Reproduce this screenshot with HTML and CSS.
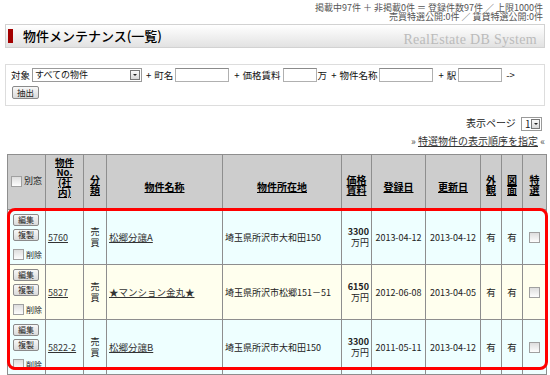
FILE: index.html
```html
<!DOCTYPE html>
<html lang="ja">
<head>
<meta charset="UTF-8">
<title>物件メンテナンス(一覧)</title>
<link rel="stylesheet" href="styles.css">
</head>
<body>
    <div class="page">
        <div class="stats">
            <div>掲載中97件 ＋ 非掲載0件 ＝ 登録件数97件 ／ 上限1000件</div>
            <div>売買特選公開:0件 ／ 賃貸特選公開:0件</div>
        </div>

        <div class="title-bar">
            <span class="mark"></span>
            <h1>物件メンテナンス(一覧)</h1>
            <span class="system">RealEstate DB System</span>
        </div>

        <form class="search">
            <div class="search-row">
                <span>対象</span>
                <span class="fake-select wide"><span class="value">すべての物件</span><span class="arrow"></span></span>
                <span class="plus">+</span><span>町名</span>
                <input type="text" class="field w54">
                <span class="plus">+</span><span>価格賃料</span>
                <input type="text" class="field w34">
                <span>万</span>
                <span class="plus">+</span><span>物件名称</span>
                <input type="text" class="field w54">
                <span class="plus">+</span><span>駅</span>
                <input type="text" class="field w44">
                <span class="go">-&gt;</span>
            </div>
            <button type="button" class="btn extract">抽出</button>
        </form>

        <div class="pager">
            表示ページ
            <span class="fake-select small"><span class="value">1</span><span class="arrow"></span></span>
        </div>
        <div class="order-link">» <a href="#">特選物件の表示順序を指定</a> «</div>

        <div class="list-wrap">
            <table class="list">
                <colgroup>
                    <col style="width:38px">
                    <col style="width:38px">
                    <col style="width:23px">
                    <col style="width:116px">
                    <col style="width:119px">
                    <col style="width:30px">
                    <col style="width:54px">
                    <col style="width:55px">
                    <col style="width:21px">
                    <col style="width:21px">
                    <col style="width:24px">
                </colgroup>
                <thead>
                    <tr>
                        <th class="win"><label><input type="checkbox" class="check"> 別窓</label></th>
                        <th class="top"><a href="#">物件<br>No.<br>(社<br>内)</a></th>
                        <th class="mid"><a href="#">分<br>類</a></th>
                        <th><a href="#">物件名称</a></th>
                        <th><a href="#">物件所在地</a></th>
                        <th class="mid"><a href="#">価格<br>賃料</a></th>
                        <th><a href="#">登録日</a></th>
                        <th><a href="#">更新日</a></th>
                        <th class="mid"><a href="#">外<br>観</a></th>
                        <th class="mid"><a href="#">図<br>面</a></th>
                        <th class="mid"><a href="#">特<br>選</a></th>
                    </tr>
                </thead>
                <tbody>
                    <tr class="blue">
                        <td class="ops">
                            <button type="button" class="btn mini">編集</button>
                            <button type="button" class="btn mini">複製</button>
                            <label class="del"><input type="checkbox" class="check"> 削除</label>
                        </td>
                        <td><a href="#" class="num">5760</a></td>
                        <td class="kind">売<br>買</td>
                        <td class="name"><a href="#">松郷分譲A</a></td>
                        <td class="addr">埼玉県所沢市大和田150</td>
                        <td class="price"><b>3300</b><br>万円</td>
                        <td class="date">2013-04-12</td>
                        <td class="date">2013-04-12</td>
                        <td class="center">有</td>
                        <td class="center">有</td>
                        <td class="center"><input type="checkbox" class="check"></td>
                    </tr>
                    <tr class="yellow">
                        <td class="ops">
                            <button type="button" class="btn mini">編集</button>
                            <button type="button" class="btn mini">複製</button>
                            <label class="del"><input type="checkbox" class="check"> 削除</label>
                        </td>
                        <td><a href="#" class="num">5827</a></td>
                        <td class="kind">売<br>買</td>
                        <td class="name"><a href="#">★マンション金丸★</a></td>
                        <td class="addr">埼玉県所沢市松郷151－51</td>
                        <td class="price"><b>6150</b><br>万円</td>
                        <td class="date">2012-06-08</td>
                        <td class="date">2013-04-05</td>
                        <td class="center">有</td>
                        <td class="center">有</td>
                        <td class="center"><input type="checkbox" class="check"></td>
                    </tr>
                    <tr class="blue">
                        <td class="ops">
                            <button type="button" class="btn mini">編集</button>
                            <button type="button" class="btn mini">複製</button>
                            <label class="del"><input type="checkbox" class="check"> 削除</label>
                        </td>
                        <td><a href="#" class="num">5822-2</a></td>
                        <td class="kind">売<br>買</td>
                        <td class="name"><a href="#">松郷分譲B</a></td>
                        <td class="addr">埼玉県所沢市大和田150</td>
                        <td class="price"><b>3300</b><br>万円</td>
                        <td class="date">2011-05-11</td>
                        <td class="date">2013-04-12</td>
                        <td class="center">有</td>
                        <td class="center">有</td>
                        <td class="center"><input type="checkbox" class="check"></td>
                    </tr>
                    <tr class="yellow">
                        <td class="ops">
                            <button type="button" class="btn mini">編集</button>
                            <button type="button" class="btn mini">複製</button>
                            <label class="del"><input type="checkbox" class="check"> 削除</label>
                        </td>
                        <td><a href="#" class="num">5801</a></td>
                        <td class="kind">売<br>買</td>
                        <td class="name"><a href="#">松郷分譲C</a></td>
                        <td class="addr">埼玉県所沢市大和田150</td>
                        <td class="price"><b>3300</b><br>万円</td>
                        <td class="date">2011-05-11</td>
                        <td class="date">2013-04-12</td>
                        <td class="center">有</td>
                        <td class="center">有</td>
                        <td class="center"><input type="checkbox" class="check"></td>
                    </tr>
                </tbody>
            </table>
            <div class="highlight"></div>
        </div>
    </div>
</body>
</html>
```

FILE: styles.css
```css
body {
    margin: 0;
    font-family: "Noto Sans CJK JP", "Noto Sans", sans-serif;
    font-size: 10px;
    color: #222;
    background-color: #fff;
    overflow: hidden;
}

a {
    color: #333;
}

.page {
    width: 541px;
    padding: 3px 0 0 5px;
}

.stats {
    text-align: right;
    padding-right: 3px;
    color: #555;
    font-size: 9px;
    line-height: 9px;
}

.title-bar {
    margin-top: 3px;
    width: 538px;
    height: 22px;
    display: flex;
    align-items: center;
    border: 1px solid #d2d2d2;
    background: linear-gradient(#ffffff, #e2e2e2);
}

.mark {
    width: 5px;
    height: 14px;
    margin-left: 2px;
    margin-right: 10px;
    background-color: #a30000;
}

.title-bar h1 {
    margin: 0;
    font-size: 13px;
    font-weight: 500;
    color: #000;
    line-height: 14px;
}

.system {
    margin-left: auto;
    margin-right: 7px;
    align-self: flex-end;
    font-family: "Liberation Serif", serif;
    font-size: 14px;
    line-height: 14px;
    color: #bbb;
    letter-spacing: 0.3px;
}

.search {
    margin: 16px 0 0;
    width: 529px;
    padding: 3px 4px 6px 5px;
    border: 1px solid #ddd;
    font-size: 9.5px;
    color: #111;
}

.search-row {
    display: flex;
    align-items: center;
    height: 14px;
}

.plus {
    margin: 0 3px 0 4px;
}

.field {
    box-sizing: border-box;
    height: 14px;
    margin: 0 1px 0 2px;
    padding: 0;
    border: 1px solid #b0b0b0;
    border-top-color: #8a8a8a;
    background-color: #fff;
}

.w54 { width: 54px; }
.w34 { width: 34px; }
.w44 { width: 44px; }

.go {
    margin-left: 3px;
}

.fake-select {
    box-sizing: border-box;
    display: inline-flex;
    align-items: center;
    height: 14px;
    border: 1px solid #9a9a9a;
    background-color: #fff;
}

.fake-select.wide {
    width: 110px;
    margin-left: 2px;
}

.fake-select .value {
    flex: 1;
    padding-left: 2px;
    font-size: 9px;
    line-height: 12px;
}

.fake-select .arrow {
    position: relative;
    width: 10px;
    height: 10px;
    margin-right: 1px;
    border: 1px solid #777;
    box-sizing: border-box;
    background: linear-gradient(#fafafa, #d8d8d8);
}

.fake-select .arrow::after {
    content: "";
    position: absolute;
    left: 2px;
    top: 3px;
    border-left: 2px solid transparent;
    border-right: 2px solid transparent;
    border-top: 2px solid #222;
}

.btn {
    font-family: inherit;
    padding: 0;
    border: 1px solid #8a8a8a;
    border-radius: 2px;
    background: linear-gradient(#f8f8f8, #dadada);
    color: #222;
    cursor: pointer;
}

.extract {
    display: block;
    margin-top: 4px;
    margin-left: 1px;
    width: 27px;
    height: 13px;
    font-size: 8.5px;
    line-height: 11px;
}

.pager {
    margin-top: 10px;
    text-align: right;
    line-height: 14px;
    padding-right: 4px;
}

.fake-select.small {
    width: 21px;
    margin-left: 3px;
    vertical-align: middle;
}

.fake-select.small .value {
    font-size: 10px;
    padding-left: 3px;
}

.order-link {
    margin-top: 4px;
    text-align: right;
    line-height: 11px;
    padding-right: 1px;
    color: #555;
}

.list-wrap {
    position: relative;
    margin-top: 8px;
    margin-left: 2px;
    width: 539px;
}

.list {
    width: 539px;
    table-layout: fixed;
    border-collapse: collapse;
    border: 1px solid #8e8e8e;
}

.list th,
.list td {
    border: 1px solid #8e8e8e;
    padding: 0 2px;
    vertical-align: middle;
}

.list th {
    height: 44px;
    padding-top: 10px;
    background-color: #cdcdcd;
    font-size: 10px;
    font-weight: bold;
    line-height: 10px;
    text-align: center;
}

.list th a {
    color: #000;
}

.list th.win {
    padding-top: 0;
    font-weight: normal;
    font-size: 9px;
}

.list th.top {
    vertical-align: top;
    padding-top: 2px;
    font-size: 9.5px;
}

.list th.mid {
    padding-top: 6px;
}

.list td {
    height: 54px;
    line-height: 11px;
}

.blue td {
    background-color: #eeffff;
}

.yellow td {
    background-color: #ffffee;
}

.list td.ops {
    padding: 0 2px 0 5px;
}

.mini {
    display: block;
    width: 26px;
    height: 12px;
    margin-bottom: 3px;
    font-size: 8px;
    line-height: 10px;
}

.del {
    display: flex;
    align-items: center;
    margin-top: 8px;
    font-size: 8px;
    white-space: nowrap;
}

.check {
    appearance: none;
    -webkit-appearance: none;
    box-sizing: border-box;
    width: 11px;
    height: 11px;
    margin: 0 2px 0 0;
    border: 1px solid #a0a0a0;
    background: linear-gradient(#dedede, #fdfdfd);
    vertical-align: middle;
}

.win label {
    display: inline-flex;
    align-items: center;
}

.num {
    font-size: 9px;
}

.kind {
    text-align: center;
    font-size: 9px;
    line-height: 10px;
}

.name {
    font-size: 9.5px;
}

.center {
    text-align: center;
    font-size: 9.5px;
}

.list td.center .check {
    margin: 0;
}

.addr {
    font-size: 9px;
}

.price {
    text-align: right;
    font-size: 9px;
    line-height: 8px;
}

.date {
    text-align: center;
    font-size: 9px;
    white-space: nowrap;
}

.highlight {
    position: absolute;
    left: 0;
    top: 54px;
    box-sizing: border-box;
    width: 541px;
    height: 162px;
    border: 3px solid #ff0000;
    border-radius: 8px;
    pointer-events: none;
}
```
